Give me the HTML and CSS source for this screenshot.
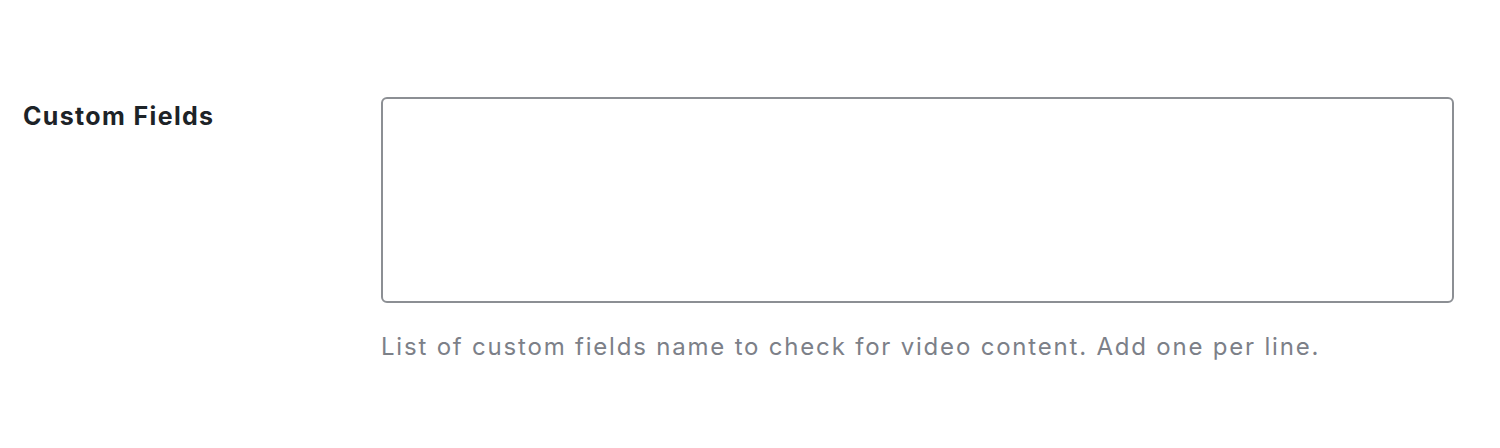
FILE: index.html
```html
<!DOCTYPE html>
<html lang="en">
<head>
<meta charset="utf-8">
<title>Custom Fields</title>
<link rel="stylesheet" href="styles.css">
</head>
<body>
<div class="form-row">
  <label class="field-label" for="custom-fields">Custom Fields</label>
  <div class="field-control">
    <textarea id="custom-fields" class="field-textarea"></textarea>
    <p class="field-description">List of custom fields name to check for video content. Add one per line.</p>
  </div>
</div>
</body>
</html>
```

FILE: styles.css
```css
html, body {
  margin: 0;
  padding: 0;
  background: #ffffff;
}
body {
  font-family: Inter, "Noto Sans", "Liberation Sans", sans-serif;
  color: #1d2327;
}
.form-row {
  display: grid;
  grid-template-columns: 358px 1073px;
  padding: 97px 0 0 23px;
}
.field-label {
  font-size: 25px;
  font-weight: 700;
  letter-spacing: 1.35px;
  line-height: 30px;
  padding-top: 4px;
  color: #1d2327;
}
.field-control {
  display: flex;
  flex-direction: column;
}
.field-textarea {
  box-sizing: border-box;
  width: 1073px;
  height: 206px;
  margin: 0;
  border: 2px solid #8c8f94;
  border-radius: 6px;
  background: #fff;
  resize: none;
  display: block;
}
.field-description {
  margin: 29px 0 0 0;
  font-size: 24px;
  letter-spacing: 1.8px;
  line-height: 30px;
  color: #7c8088;
}
```
